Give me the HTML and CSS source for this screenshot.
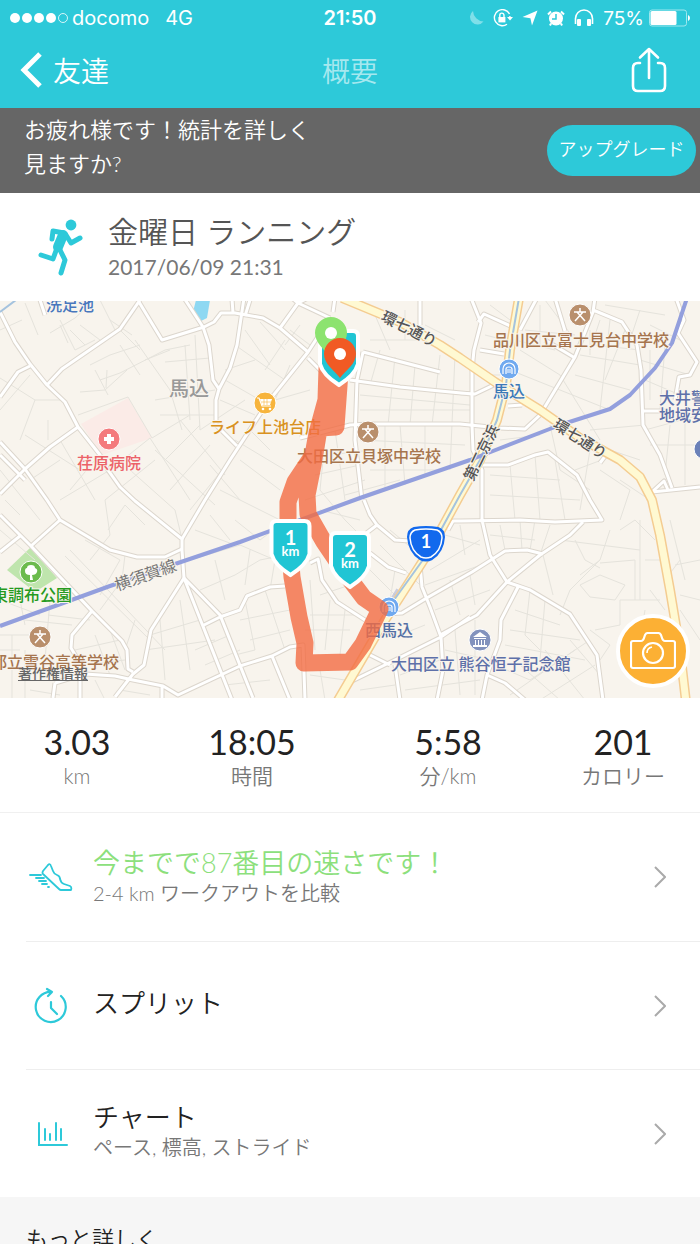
FILE: index.html
```html
<!DOCTYPE html>
<html lang="ja">
<head>
  <meta charset="utf-8">
  <meta name="viewport" content="width=device-width, initial-scale=1">
  <title>概要</title>
  <link rel="stylesheet" href="styles.css">
</head>
<body>
  <header class="top">
    <div class="status">
      <div class="status-left">
        <svg class="signal" width="58" height="12" viewBox="0 0 58 12" fill="#fff">
          <circle cx="5" cy="6" r="5"/><circle cx="17" cy="6" r="5"/><circle cx="29" cy="6" r="5"/><circle cx="41" cy="6" r="5"/>
          <circle cx="53" cy="6" r="4.5" fill="none" stroke="#fff" stroke-width="0.8"/>
        </svg>
        <span>docomo</span>
        <span class="network">4G</span>
      </div>
      <span class="clock">21:50</span>
      <div class="status-right">
        <svg width="16" height="18" viewBox="0 0 16 18"><path d="M5 2a7.5 7.5 0 1 0 10.500 10.500A11 11 0 0 1 5 2z" fill="#7fdfe9"/></svg>
        <svg width="20" height="18" viewBox="0 0 20 18" fill="none" stroke="#fff" stroke-width="1.4">
          <path d="M16.5 5A8 8 0 1 0 14 15.2M16.9 7v3"/><path d="M14 8h6l-3 3.6z" fill="#fff" stroke="none"/>
          <rect x="5.4" y="8" width="7" height="5.4" fill="#fff" stroke="none"/><path d="M6.8 8V6.2a2.1 2.1 0 0 1 4.2 0V8"/>
        </svg>
        <svg width="16" height="18" viewBox="0 0 16 18"><path d="M15.500 1.500L10 16.500 8.400 9.300.5 8z" fill="#fff"/></svg>
        <svg width="18" height="18" viewBox="0 0 18 18">
          <circle cx="9" cy="9.5" r="7" fill="#fff"/><path d="M1 5.5L4 2.5M17 5.5l-3-3M4 14.500l-1 2M14 14.500l1 2" stroke="#fff" stroke-width="2"/>
          <path d="M9 5v5H5" fill="none" stroke="#2dc9d9" stroke-width="1.5"/>
        </svg>
        <svg width="20" height="18" viewBox="0 0 20 18"><path d="M1.500 15V9.500a8.500 8.500 0 0 1 17 0V15" fill="none" stroke="#fff" stroke-width="1.6"/><rect x="3" y="10" width="4" height="7" rx="1" fill="#fff"/><rect x="13" y="10" width="4" height="7" rx="1" fill="#fff"/></svg>
        <span>75%</span>
        <svg class="battery" width="41" height="18" viewBox="0 0 41 18"><rect x=".5" y="1" width="37" height="16" rx="2.5" fill="none" stroke="#9de7ee"/><rect x="1.5" y="2" width="26" height="14" rx="1.5" fill="#fff"/><path d="M39 6q2 1 2 3t-2 3z" fill="#fff"/></svg>
      </div>
    </div>
    <nav class="nav">
      <a class="back" href="#friends">
        <svg width="24" height="36" viewBox="0 0 24 36"><path d="M20 2L4 18l16 16" fill="none" stroke="#fff" stroke-width="5"/></svg>
        友達
      </a>
      <h1>概要</h1>
      <button class="share" type="button" aria-label="共有">
        <svg width="36" height="46" viewBox="0 0 36 46" fill="none" stroke="#fff" stroke-width="2.6" stroke-linecap="round" stroke-linejoin="round">
          <path d="M9 16H7q-5 0-5 5v18q0 5 5 5h22q5 0 5-5V21q0-5-5-5h-2M18 31V2M9 10.500L18 2l9 8.500"/>
        </svg>
      </button>
    </nav>
  </header>

  <section class="banner">
    <p>お疲れ様です！統計を詳しく<br>見ますか?</p>
    <button class="upgrade" type="button">アップグレード</button>
  </section>

  <section class="activity">
    <svg width="46" height="58" viewBox="0 0 46 58" fill="none" stroke="#2dc9d9" stroke-linecap="round" stroke-linejoin="round">
      <circle cx="33" cy="7" r="5.4" fill="#2dc9d9" stroke="none"/>
      <path d="M14 21l1-8 11 2" stroke-width="5"/>
      <path d="M25 17l-5 12" stroke-width="10"/>
      <path d="M28 17l5 8 9-5" stroke-width="5"/>
      <path d="M19 30l-4 11L3 37" stroke-width="5"/>
      <path d="M21 30l6 12-4 13" stroke-width="5"/>
    </svg>
    <div>
      <h2>金曜日 ランニング</h2>
      <time datetime="2017-06-09T21:31">2017/06/09 21:31</time>
    </div>
  </section>

  <section class="map">
    <svg class="map-canvas" viewBox="0 301 700 397" role="img" aria-label="ランニングのルート">
      <defs>
        <g id="roads">
          <path d="M0 312L15 342 30 364 47 385 65 402 78 427 100 455 108 470 120 487 135 501 182 539V550L184 578"/>
          <path d="M140 300L120 329 62 369 47 385M139 302L162 340 204 327 214 322 221 313H235L263 318 280 328 308 352"/>
          <path d="M184 298L203 327 209 345 213 380 219 389 216 400V425L237 446M244 298L237 345 230 368 219 389M0 397L18 372 30 366M40 300l5 15M233 313l-1-14"/>
          <path d="M0 442L25 469 47 500 60 520 110 550 137 557H165L182 549M0 494L25 469 50 447 78 427M60 520L31 546M0 552L20 536"/>
          <path d="M0 515L31 546 92 611 122 641 127 650 128 669 133 672M92 611L72 635 71 648 80 663V700M55 683L85 674 115 676 133 680 163 686 178 695 240 666 272 656 290 647 303 645 305 700M162 686v14M272 656l18 44"/>
          <path d="M182 539L205 500 230 460 268 402 308 352 330 318M184 578L151 630 144 665 133 674 115 697M184 578L232 700M184 578L220 615 253 698M204 625L220 617 240 610 247 596 270 587 285 586"/>
          <path d="M280 328L298 303 330 318M292 298l6 5 14-7M310 563L318 559 322 580 337 602 365 620M364 500L370 515 377 525 395 540 410 541M377 525L360 538M370 553L388 567 406 573M250 300l-5 16M55 683l-2 15"/>
          <path d="M420 565L422 587 430 607 441 637 443 670 437 700M385 614L402 613 425 599 472 572 505 551 527 550 543 554M470 617L441 637 395 660 350 682M364 652L390 665M395 665L400 700"/>
          <path d="M471 298L481 323 474 350 472 370V425L473 450 482 470V520L490 555 507 582M448 530L453 521H460L520 520 555 522 602 520 590 500 577 475 548 452 535 455 508 465H480"/>
          <path d="M583 522L570 535 540 555 507 582 477 615 440 635M507 582L530 590 570 614 597 655 603 700M518 587L501 620 500 640 487 675 482 700M487 675L505 683 525 700"/>
          <path d="M595 298L593 312 575 357 540 415 525 429 500 428 460 424H370L350 425 300 438M593 310L622 322 637 345 641 370 643 425 660 455 672 488M478 322L484 314 515 328M480 350L504 354"/>
          <path d="M537 298L520 330M555 298L565 331M545 340L575 358M460 393L475 394 498 383M508 406L522 405M363 352L440 372M350 380L400 387 440 391 472 394M363 352L357 380 355 440 362 500M420 300V325M335 298l-2 14M308 358L322 372"/>
          <path d="M676 298L684 320 678 333 697 362 690 375 679 377 675 400M643 411H666M600 463L606 455M652 492L664 481 668 490M652 492L700 487M0 455L25 480"/>
        </g>
        <path id="loop-road" d="M342 298L400 322 440 345 460 358 495 382 540 410 580 438 620 460 640 477 652 500 660 535 670 590 680 650 686 702"/>
        <path id="route-one" d="M519 298L510 350 506 385 497 420 480 460 460 495 430 550 385 620 337 702"/>
      </defs>
      <rect y="301" width="700" height="397" fill="#f8f4ed"/>
      <path d="M81 424L128 398 152 438 102 455z" fill="#fbebe7"/>
      <path d="M7 570L30 548 57 578 35 592z" fill="#bfe5ad"/>
      <path d="M196 300L193 312 201 321 207 318 210 300z" fill="#8ed8f2"/>

      <g class="streets">
        <path d="M0 330L22 320M25 303L38 335M50 333L75 318 95 300M60 320L75 350 95 340M68 343L60 325M85 345L70 330M80 325L100 340M100 300L115 330M110 320L132 335M120 330L140 350M78 415L128 397 152 438 190 415M90 365L110 355 140 345M100 380L120 373 165 350 190 345M80 392L105 390 127 370M95 370L108 395M107 370L106 388M120 345L140 375M135 340L170 390 182 430M145 360L170 350M165 362L210 358M185 345L190 420M195 335L200 430M155 400L215 390M160 415L215 415"/>
        <path d="M0 378L35 400 60 400M35 400L20 440M48 420L48 440M25 435L80 470M60 440L95 500M0 470L40 520M30 480L60 460M0 410L30 375M60 500L110 470 150 438M95 460L70 490M105 500L155 460M150 438L190 500M180 420L225 475M165 460L200 425M170 490L210 445M190 510L238 450M200 430L245 400M220 400L255 415M130 470L175 510 182 539M155 450L215 505M210 465L240 500M220 490L280 520M0 530L35 560M105 500L110 535 90 560M108 530L125 505 145 525M85 540L120 560 100 595M125 555L122 580 100 610M70 550L165 650M65 556L150 640M5 500L20 515"/>
        <path d="M245 330L270 365M260 322L285 350M235 345L285 380M225 380L260 400M285 340L265 370M300 325L285 345M310 345L290 330M235 440L285 470M240 460L280 490M250 430L270 450M225 370L255 360M290 365L275 400 310 390M325 440L320 490 345 520M305 500L365 480M335 430L345 500M315 475L360 465M330 455L370 450M345 495L400 480M360 395L470 405M360 410H470M380 350L370 385M395 357L388 425M415 365L410 425M440 355L432 425M455 355L450 470M370 340L420 340 400 325M375 315L390 350M405 310V340M425 325L455 340M385 425V490M400 425L405 485M425 425V475M360 440L465 445M370 470H440"/>
        <path d="M485 335L505 340M490 305L510 320M485 375L500 375M515 340L555 350M520 350L560 375M510 370L560 390M525 330L575 335M540 305V345M580 355L640 365M575 375L630 390M560 390L610 410M560 375L600 440M590 330L590 355M600 320L590 350M610 320L600 410M625 330L605 380M595 345L640 350M545 300L575 340M605 305L665 315M640 310L630 340M650 325L680 340M640 360L690 375M645 380L680 395M650 350L650 400M665 345L660 410M550 425L560 470 590 490M590 450L580 510M600 470L630 490 620 520M575 470L615 455M610 450L640 460M645 430L700 415M650 445L700 445M670 425L665 475M685 415V485M620 480L650 500M590 430L645 425M500 440L540 435M490 475L560 480M510 465L515 520M535 455L540 520M555 460L565 520M490 495L580 500"/>
        <path d="M490 535L535 540M500 525L505 550M520 520L522 550M535 520L530 550M550 525L540 555M543 555L553 595M560 540L640 550M610 530L600 560 580 575M620 530L635 520 655 540M600 563L635 560 635 600M645 560L665 560M580 585L600 575 625 585 615 600 590 597zM600 560L570 590 560 615M575 540L585 560 600 568M640 520L640 600M620 600L660 600M620 600L620 625 595 630M650 590L665 610M670 520L680 560 665 580M675 565L700 560M680 560L685 580M680 595L700 600M680 610L700 640M645 610L640 640M590 630L610 645 600 660M530 590L525 635 540 650M545 600L540 660M515 610L560 625M510 630L580 640M505 645L585 660M495 665L530 680 590 640M510 695L575 650M540 700L595 665M520 665L560 700M545 650L585 700M570 640L600 675"/>
        <path d="M235 520L260 540 280 525M240 545L275 560M235 575L260 560 310 550M250 550L245 585M275 560L270 590M240 620L290 610M245 600L255 650M265 590L285 650M250 640L290 630M310 580L315 650M320 595L350 585M310 615L355 615M330 600L325 650M345 610L340 655M305 630L350 630M310 675L345 680M320 670L325 700M380 545L425 590M390 530L420 555M365 565L400 600M395 570L390 600M430 570L480 540M425 585L495 560M435 610L490 590M450 580L460 615M470 575L475 605M445 535L480 545M460 525L465 555M400 635L425 625M415 650L435 640M400 675L440 660M405 690L480 680M455 630L460 695M475 620L475 695M445 650L490 660M360 690L395 685"/>
        <path d="M0 600L40 615M20 600L25 625M50 600L45 660M25 620L72 625M0 635L35 635M0 650L20 650M12 635V700M25 650V700M48 615L90 620M75 650L120 640M80 665L125 660M95 635L110 675M110 630L125 670M150 635L200 620M145 650L215 640M160 620L165 680M180 600L190 670M135 620L125 650M190 560L240 545M200 590L235 575M215 560L225 600M195 530L235 545M210 515L230 540M195 650L230 635M205 665L240 650M225 685L270 680M235 655L255 650M95 680L105 700M120 690L150 695M30 690L60 695M345 520L370 545M320 510L360 520"/>
      </g>

      <use href="#roads" class="road-edge"/>
      <use href="#roads" class="road"/>
      <path d="M511 340L505 375M399 590L391 603" stroke="#b6bdd8" stroke-width="6" opacity=".7"/>
      <use href="#loop-road" class="main-edge"/>
      <use href="#route-one" class="main-edge"/>
      <use href="#loop-road" class="main-road"/>
      <use href="#route-one" class="main-road"/>
      <path d="M519 298L510 350 506 385 497 420 480 460 460 495 430 550 389 607" class="subway"/>
      <path d="M0 626L110 586 175 564 240 542 360 498 470 460 560 425 610 409 630 395 655 368 672 343 687 298" class="railway"/>
      <path d="M0 312L16 300" fill="none" stroke="#a5c3de" stroke-width="2"/>

      <g class="places">
        <text x="46" y="311" fill="#4877bd">洗足池</text>
        <text x="169" y="396" class="district">馬込</text>
        <text x="77" y="469" fill="#ec6268">荏原病院</text>
        <text x="209" y="433" fill="#d99120">ライフ上池台店</text>
        <text x="297" y="462" fill="#a6754e">大田区立貝塚中学校</text>
        <text x="493" y="346" fill="#a6754e">品川区立冨士見台中学校</text>
        <text x="493" y="397" fill="#3b79b7">馬込</text>
        <text x="365" y="636" fill="#5470a5">西馬込</text>
        <text x="659" y="404" fill="#5e70a9">大井警察</text>
        <text x="659" y="421" fill="#5e70a9">地域安全</text>
        <text x="-8" y="601" fill="#259a20">東調布公園</text>
        <text x="-9" y="668" fill="#a6754e">都立雪谷高等学校</text>
        <text x="391" y="670" fill="#5e70a9">大田区立 熊谷恒子記念館</text>
        <text transform="translate(380 320) rotate(27)" class="road-name">環七通り</text>
        <text transform="translate(552 427) rotate(33)" class="road-name">環七通り</text>
        <text transform="translate(473 482) rotate(-64)" class="road-name">第二京浜</text>
        <text transform="translate(117 591) rotate(-19)" class="line-name">横須賀線</text>
      </g>

      <g stroke="#fff" stroke-width="1">
        <circle cx="109" cy="439" r="11" fill="#f47a7d"/><circle cx="265" cy="403" r="11" fill="#f7b43c"/>
        <circle cx="368" cy="432" r="11" fill="#b98f6c"/><circle cx="580" cy="315" r="11" fill="#b98f6c"/><circle cx="40" cy="637" r="11" fill="#b98f6c"/>
        <circle cx="509" cy="369" r="10" fill="#70a9ef"/><circle cx="389" cy="607" r="10" fill="#70a9ef"/>
        <circle cx="31" cy="572" r="11" fill="#6bbb4d"/><circle cx="480" cy="640" r="11" fill="#8292bd"/><circle cx="704" cy="449" r="10" fill="#6b81b8"/>
      </g>
      <path d="M109 434v10M104 439h10" stroke="#fff" stroke-width="4"/>
      <path d="M257 398h2l3 8h9" fill="none" stroke="#fff" stroke-width="1.2"/>
      <path d="M260 399h12l-2 6h-8z" fill="#fff"/>
      <path d="M264 399v6M267 399v6M261 402h10" stroke="#f7b43c" stroke-width=".6"/>
      <circle cx="263" cy="409" r="1.3" fill="#fff"/><circle cx="270" cy="409" r="1.3" fill="#fff"/>
      <g fill="none" stroke="#fff" stroke-width="1.5">
        <path id="school" d="M362 429h12M368 425v4M363 438l8-9M373 438l-8-9"/>
        <use href="#school" x="212" y="-117"/><use href="#school" x="-328" y="205"/>
        <g id="station" stroke-width="1.2">
          <path d="M503 374v-5a6 6 0 0 1 12 0v5M506 374v-5q0-2 3-2t3 2v5M507 370h4M507 372h4"/>
        </g>
        <use href="#station" x="-120" y="238"/>
      </g>
      <path d="M30 580v-5q-5 0-5-4 0-3 2-3 0-3 4-3t4 3q3 1 2 4-1 3-5 3l1 5z" fill="#fff"/>
      <path d="M473 637l7-5 7 5zM474 638h12v1h-12zM475 640h1v5h-1zM478 640h1v5h-1zM481 640h1v5h-1zM484 640h1v5h-1zM473 645h14v2h-14z" fill="#fff"/>

      <path class="route" d="M327 368L326 400 317 433 313 455 295 482 288 502 288 530 292 577 299 617 305 643 304 663 350 662 363 644 380 609 364 598 345 573 324 542 308 514 307 495 313 465 318 435 320 428 336 427 340 372"/>

      <g transform="translate(426 544)">
        <path d="M-12-16Q0-18 12-16 18-14 18-7 17 8 6 15q-6 3-12 0Q-17 8-18-7-18-14-12-16z" fill="#1269ed" stroke="#1269ed" stroke-width="2"/>
        <path d="M-11-14Q0-16 11-14 16-12 16-6 15 7 5 13q-5 2-10 0Q-15 7-16-6-16-12-11-14z" fill="none" stroke="#fff" stroke-width="1.5"/>
        <text y="4" class="route-number">1</text>
      </g>
      <g class="km-sign" transform="translate(290.5 520)">
        <path d="M-14 1h28q5 0 5 5v28Q16 45 0 55-16 45-19 34V6q0-5 5-5z"/>
        <text y="25" class="km-number">1</text><text y="36" class="km-unit">km</text>
      </g>
      <g class="km-sign" transform="translate(350 532)">
        <path d="M-14 1h28q5 0 5 5v28Q16 45 0 55-16 45-19 34V6q0-5 5-5z"/>
        <text y="25" class="km-number">2</text><text y="36" class="km-unit">km</text>
      </g>
      <g class="km-sign" transform="translate(339 330)">
        <path d="M-14 1h28q5 0 5 5v28Q16 45 0 55-16 45-19 34V6q0-5 5-5z"/>
      </g>
      <path d="M331 317a16 16 0 0 1 16 16c0 10-10 17-16 25-6-8-16-15-16-25a16 16 0 0 1 16-16z" fill="#8ce36f"/>
      <circle cx="331" cy="333" r="6" fill="#fff"/>
      <path d="M340 338a16 16 0 0 1 16 16c0 10-10 16-16 24-6-8-16-14-16-24a16 16 0 0 1 16-16z" fill="#f15a24"/>
      <circle cx="340" cy="354" r="6" fill="#fff"/>
    </svg>
    <a class="legal" href="#legal">著作権情報</a>
    <button class="camera" type="button" aria-label="写真を追加">
      <svg width="46" height="38" viewBox="0 0 46 38" fill="none" stroke="#fff" stroke-width="2.2" stroke-linejoin="round">
        <path d="M3 9h8q2 0 3-3l1-3q1-2 3-2h10q2 0 3 2l1 3q1 3 3 3h8q2 0 2 2v23q0 2-2 2H3q-2 0-2-2V11q0-2 2-2z"/>
        <circle cx="23" cy="21" r="10"/><path d="M17 21q0-5 5-6" stroke-width="1.6"/>
      </svg>
    </button>
  </section>

  <dl class="stats">
    <div><dt>km</dt><dd>3.03</dd></div>
    <div><dt>時間</dt><dd>18:05</dd></div>
    <div><dt>分/km</dt><dd>5:58</dd></div>
    <div><dt>カロリー</dt><dd>201</dd></div>
  </dl>

  <main class="rows">
    <a class="row" href="#compare">
      <svg class="row-icon" width="44" height="40" viewBox="0 0 44 40" fill="none" stroke="#2dc9d9" stroke-width="1.8" stroke-linecap="round" stroke-linejoin="round">
        <path d="M19 8q2-2 3 1l2 5q1 3 4 4 3 1 3 4 1 4 4 5l6 2q2 1 1 4H32q-1 0-2-1L14 17q-1-1 0-3zM1 18h11M7 21h8M10 24h7M13 27h5M19 30h1"/>
      </svg>
      <span class="row-text">
        <span class="row-title ranking">今までで87番目の速さです！</span>
        <span class="row-note">2-4 km ワークアウトを比較</span>
      </span>
      <svg class="chevron" width="12" height="22" viewBox="0 0 12 22"><path d="M1 1l10 10L1 21"/></svg>
    </a>
    <a class="row" href="#splits">
      <svg class="row-icon" width="44" height="40" viewBox="0 0 44 40" fill="none" stroke="#2dc9d9" stroke-width="2.2" stroke-linecap="round" stroke-linejoin="round">
        <path d="M32 10A15 15 0 1 1 23 6M18 3l5 3-4 4M22 16v6l6 6"/>
      </svg>
      <span class="row-text"><span class="row-title">スプリット</span></span>
      <svg class="chevron" width="12" height="22" viewBox="0 0 12 22"><path d="M1 1l10 10L1 21"/></svg>
    </a>
    <a class="row" href="#charts">
      <svg class="row-icon" width="44" height="40" viewBox="0 0 44 40" fill="none" stroke="#2dc9d9" stroke-width="2" stroke-linecap="round">
        <path d="M10 9v22h28M16 15v11M21 20v6M27 9v17M32 15v11"/>
      </svg>
      <span class="row-text">
        <span class="row-title">チャート</span>
        <span class="row-note">ペース, 標高, ストライド</span>
      </span>
      <svg class="chevron" width="12" height="22" viewBox="0 0 12 22"><path d="M1 1l10 10L1 21"/></svg>
    </a>
  </main>

  <section class="more">
    <h2>もっと詳しく</h2>
  </section>
</body>
</html>
```
FILE: styles.css
```css
* {
  box-sizing: border-box;
}
body {
  display: flex;
  flex-direction: column;
  height: 100vh;
  margin: 0;
  overflow: hidden;
  background-color: #fff;
  color: #222;
  font-family: Lato, "Noto Sans CJK JP", sans-serif;
  font-weight: 350;
}
body > * {
  flex-shrink: 0;
}
h1, h2, p, dl, dd {
  margin: 0;
  font-weight: 350;
}
a {
  color: inherit;
  text-decoration: none;
}
button {
  padding: 0;
  border: 0;
  font: inherit;
  color: #fff;
}
svg {
  display: block;
}

/* header */
.top {
  height: 108px;
  background-color: #2dc9d9;
  color: #fff;
}
.status {
  display: grid;
  grid-template-columns: 1fr auto 1fr;
  align-items: center;
  height: 36px;
  padding: 0 10px;
  font-family: Inter, sans-serif;
  font-size: 20px;
  font-weight: 400;
}
.status-left, .status-right {
  display: flex;
  align-items: center;
}
.signal {
  margin-right: 4px;
}
.network {
  margin-left: 16px;
}
.clock {
  font-weight: 600;
}
.status-right {
  justify-content: flex-end;
  gap: 9px;
  font-size: 19px;
}
.battery {
  margin-left: -4px;
}
.nav {
  display: grid;
  grid-template-columns: 1fr auto 1fr;
  align-items: center;
  height: 68px;
  padding: 0 20px;
  font-size: 28px;
}
.nav h1 {
  font-size: 28px;
  color: #a6e8ef;
}
.back {
  display: flex;
  align-items: center;
  gap: 9px;
}
.share {
  justify-self: end;
  margin-right: 13px;
  background: none;
}

.banner {
  display: flex;
  align-items: center;
  justify-content: space-between;
  height: 85px;
  padding: 0 4px 8px 24px;
  background-color: #666;
  color: #fff;
  font-size: 22px;
  line-height: 34px;
}
.upgrade {
  width: 149px;
  height: 51px;
  margin-top: 8px;
  padding-bottom: 4px;
  border-radius: 26px;
  background-color: #2dc9d9;
  font-size: 18px;
}

.activity {
  display: flex;
  align-items: center;
  gap: 24px;
  height: 108px;
  padding-left: 38px;
}
.activity h2 {
  font-size: 30px;
  line-height: 40px;
  color: #555;
}
.activity time {
  display: block;
  font-size: 21px;
  font-weight: 400;
  line-height: 32px;
  color: #777;
}

/* map */
.map {
  position: relative;
}
.map-canvas {
  width: 100%;
  height: auto;
}
.streets, .road, .road-edge, .main-road, .main-edge, .subway, .railway, .route {
  fill: none;
  stroke-linejoin: round;
}
.streets {
  stroke: #e5e3dc;
  stroke-width: 1;
}
.road-edge {
  stroke: #dcd6cd;
  stroke-width: 5;
}
.road {
  stroke: #fff;
  stroke-width: 3;
}
.main-edge {
  stroke: #f4cc91;
  stroke-width: 10;
}
.main-road {
  stroke: #fff9d2;
  stroke-width: 7;
}
.subway {
  stroke: #a5c3de;
  stroke-width: 2;
}
.railway {
  stroke: #939fdd;
  stroke-width: 4;
}
.route {
  stroke: #f26b42;
  stroke-width: 17;
  stroke-linecap: round;
  stroke-opacity: .8;
}
.places {
  font-family: "Noto Sans CJK JP", sans-serif;
  font-size: 16px;
  font-weight: 500;
  stroke: #f8f4ed;
  stroke-width: 2px;
  paint-order: stroke;
}
.places .district {
  font-size: 20px;
  fill: #999;
}
.places .road-name {
  font-size: 15px;
  fill: #555;
}
.places .line-name {
  font-size: 16px;
  font-weight: 400;
  fill: #777;
}
.route-number {
  fill: #fff;
  font-size: 18px;
  font-weight: 700;
  text-anchor: middle;
}
.km-sign path {
  fill: #20c5d4;
  stroke: #fff;
  stroke-width: 4px;
}
.km-sign text {
  fill: #fff;
  font-weight: 700;
  text-anchor: middle;
}
.km-number {
  font-size: 20px;
}
.km-unit {
  font-size: 13px;
}
.legal {
  position: absolute;
  left: 18px;
  bottom: 14px;
  color: #666;
  font-size: 14px;
  font-weight: 500;
  line-height: 20px;
  text-decoration: underline;
}
.camera {
  position: absolute;
  right: 10px;
  bottom: 10px;
  display: flex;
  align-items: center;
  justify-content: center;
  width: 74px;
  height: 74px;
  border: 4px solid #fff;
  border-radius: 50%;
  background-color: #fcb034;
}

/* totals */
.stats {
  display: grid;
  grid-template-columns: 22fr 28fr 28fr 22fr;
  height: 115px;
  padding-top: 24px;
  border-bottom: 1px solid #f0f0f0;
  text-align: center;
}
.stats div {
  display: flex;
  flex-direction: column-reverse;
  justify-content: flex-end;
}
.stats dd {
  font-size: 34px;
  font-weight: 400;
  line-height: 40px;
}
.stats dt {
  color: #777;
  font-size: 21px;
  line-height: 28px;
}

.rows {
  padding-left: 26px;
}
.row {
  display: flex;
  align-items: center;
  height: 128px;
  padding-right: 34px;
}
.row + .row {
  border-top: 1px solid #eee;
}
.row-icon {
  margin-right: 20px;
  margin-left: 3px;
}
.row-text {
  display: flex;
  flex: 1;
  flex-direction: column;
}
.row + .row .row-text {
  padding-bottom: 6px;
}
.row-title {
  font-size: 26px;
  line-height: 32px;
}
.ranking {
  color: #8ce07c;
  font-size: 27px;
}
.row-note {
  color: #777;
  font-size: 20px;
  line-height: 28px;
}
.chevron path {
  fill: none;
  stroke: #aaa;
  stroke-width: 2;
}

.more {
  flex: 1 0 0;
  padding: 26px;
  background-color: #f6f6f6;
}
.more h2 {
  font-size: 22px;
  line-height: 32px;
}
```
